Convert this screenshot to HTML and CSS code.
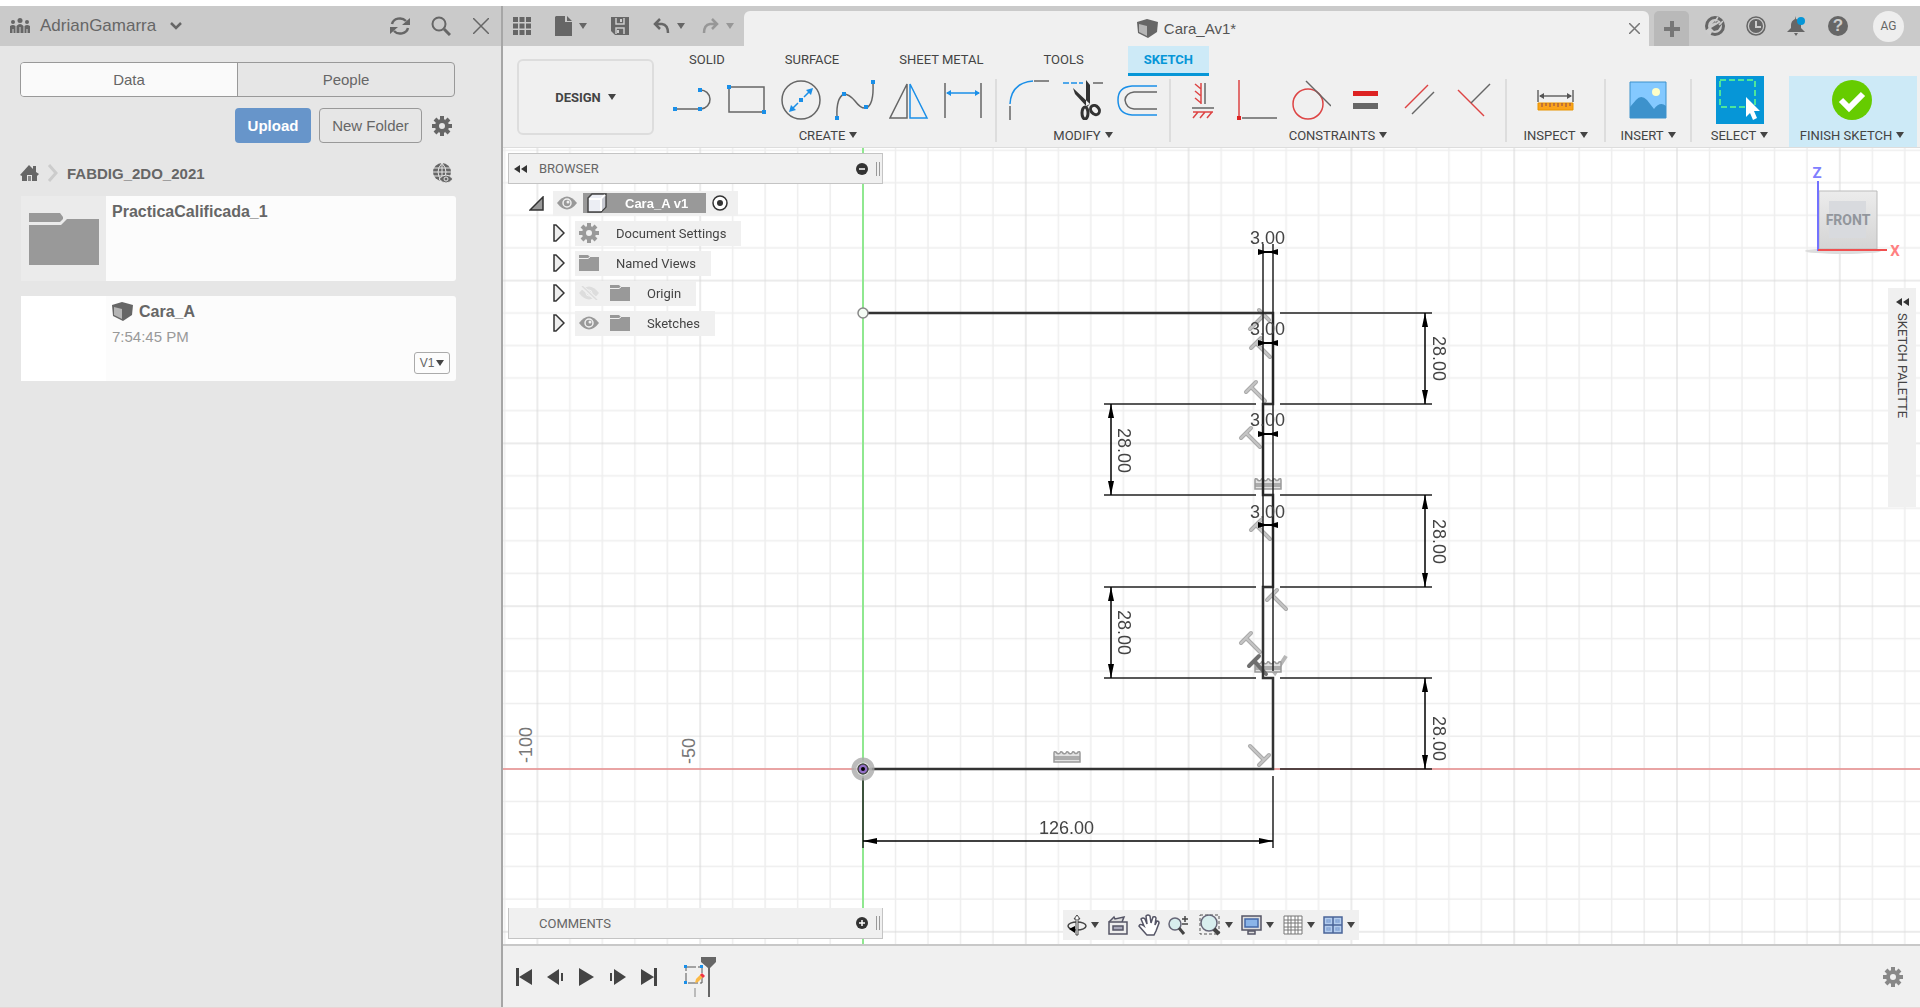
FILE: index.html
```html
<!DOCTYPE html>
<html lang="en">
<head>
  <meta charset="UTF-8" />
  <meta name="viewport" content="width=device-width, initial-scale=1.0"/>
  <title>Cara_A v1 - Sketch</title>
  <link rel="stylesheet" href="styles.css">
</head>
<body>

  <!-- shared icons -->
  <svg class="defs" width="0" height="0">
    <symbol id="cube" viewBox="0 0 21 20">
      <path d="M0 3 10 0 21 3 20 13 11 19 1 14Z" fill="#666"/>
      <path d="M2 5 10 7V17L2 13Z" fill="#b5b5b5"/>
    </symbol>
    <symbol id="gear" viewBox="0 0 20 20">
      <circle cx="10" cy="10" r="5" fill="none" stroke="currentColor" stroke-width="4"/>
      <path d="M10 0V4M10 16V20M0 10H4M16 10H20M3 3 5.500 5.500M14.500 14.500 17 17M17 3 14.500 5.500M5.500 14.500 3 17" stroke="currentColor" stroke-width="4"/>
    </symbol>
    <symbol id="folder" viewBox="0 0 20 16">
      <path d="M0 0H9L11 2H20V16H0Z" fill="#999"/>
      <path d="M0 3.500H9L11 2" fill="none" stroke="#f0f0f0"/>
    </symbol>
    <symbol id="eye" viewBox="0 0 20 14">
      <path d="M0 7Q10-6 20 7Q10 20 0 7Z" fill="#999"/>
      <circle cx="10" cy="7" r="4" fill="#999" stroke="#f0f0f0" stroke-width="1.500"/>
      <circle cx="11" cy="6" r="1.500" fill="#f0f0f0"/>
    </symbol>
    <symbol id="expand" viewBox="0 0 12 18">
      <path d="M1 1H3L11 9 3 17H1Z" fill="#eee" stroke="#333" stroke-width="1.500"/>
    </symbol>
    <symbol id="rewind" viewBox="0 0 13 8">
      <path d="M6 0V8L0 4ZM13 0V8L7 4Z" fill="#333"/>
    </symbol>
  </svg>

  <div class="app">
    <aside class="data-panel">
      <header class="panel-header">
        <svg width="20" height="16" viewBox="0 0 20 16" fill="#666">
          <circle cx="3" cy="4" r="2"/><circle cx="10" cy="2.500" r="2.500"/><circle cx="17" cy="4" r="2"/>
          <path d="M0 15V8Q3 6 5.500 8V15ZM6.500 15V8Q10 4 13.500 8V15ZM14.500 15V8Q17 6 20 8V15Z"/>
          <path d="M3 11V15M10 9V15M17 11V15" stroke="#ccc"/>
        </svg>
        <button class="team-name">AdrianGamarra
          <svg width="12" height="8" viewBox="0 0 12 8"><path d="M1 1 6 6 11 1" fill="none" stroke="#666" stroke-width="2.500"/></svg>
        </button>
        <button aria-label="Refresh">
          <svg width="22" height="18" viewBox="0 0 22 18" fill="none" stroke="#666" stroke-width="2.500">
            <path d="M3 7A8 7 0 0 1 17 4M19 11A8 7 0 0 1 5 14"/>
            <path d="M21 1V8H13ZM1 17V10H9Z" fill="#666" stroke="none"/>
          </svg>
        </button>
        <button aria-label="Search">
          <svg width="20" height="20" viewBox="0 0 20 20" fill="none" stroke="#666"><circle cx="8" cy="8" r="6.500" stroke-width="2"/><path d="M13 13 19 19" stroke-width="3"/></svg>
        </button>
        <button aria-label="Close panel">
          <svg width="16" height="16" viewBox="0 0 16 16" stroke="#666" stroke-width="1.500"><path d="M0 0 16 16M16 0 0 16"/></svg>
        </button>
      </header>

      <div class="panel-body">
        <div class="switch">
          <button class="active">Data</button>
          <button>People</button>
        </div>

        <div class="actions">
          <button class="upload">Upload</button>
          <button class="new-folder">New Folder</button>
          <button class="plain" aria-label="Settings"><svg width="20" height="20"><use href="#gear"/></svg></button>
        </div>

        <div class="breadcrumb">
          <svg width="19" height="18" viewBox="0 0 19 18"><path d="M9 1 13 5V2H16V8L19 10 17 12V17H12V11H7V17H2V12L0 11Z" fill="#666"/><path d="M8 12H11V17H8Z" fill="#888"/></svg>
          <svg width="12" height="18" viewBox="0 0 12 18"><path d="M2 1 9 9 2 17" fill="none" stroke="#ccc" stroke-width="3"/></svg>
          <a href="#">FABDIG_2DO_2021</a>
          <svg width="21" height="21" viewBox="0 0 21 21">
            <circle cx="10" cy="9" r="9" fill="#666"/>
            <path d="M0 5H20M0 9H20M0 13H20M10 0V18M10 0Q2 9 10 18M10 0Q18 9 10 18" fill="none" stroke="#e6e6e6"/>
            <path d="M7 16Q14 8 21 16Q14 24 7 16Z" fill="#666" stroke="#e6e6e6"/><circle cx="14" cy="16" r="2" fill="#666" stroke="#e6e6e6"/>
          </svg>
        </div>

        <article class="card">
          <div class="thumb folder-thumb">
            <svg width="70" height="52" viewBox="0 0 70 52" fill="#999"><path d="M0 0H31L34 4V6L31 9H0Z"/><path d="M0 12H32L38 6H70V52H0Z"/></svg>
          </div>
          <div class="card-text"><h2>PracticaCalificada_1</h2></div>
        </article>

        <article class="card">
          <div class="thumb"></div>
          <div class="card-text">
            <h2><svg width="21" height="20"><use href="#cube"/></svg>Cara_A</h2>
            <p>7:54:45 PM</p>
            <button class="version">V1<span class="caret"></span></button>
          </div>
        </article>
      </div>
    </aside>

    <main class="workspace">
      <header class="topbar">
        <div class="quick">
          <button aria-label="Show data panel">
            <svg width="18" height="18" viewBox="0 0 18 18"><path d="M2.500 0V18M9 0V18M15.500 0V18" stroke="#666" stroke-width="5"/><path d="M0 5.700H18M0 12.200H18" stroke="#ccc" stroke-width="1.500"/></svg>
          </button>
          <button class="with-caret" aria-label="File">
            <svg width="17" height="20" viewBox="0 0 17 20"><path d="M0 1 1 0H10V6H17V20H0ZM12 0 17 5H12Z" fill="#666"/></svg><span class="caret"></span>
          </button>
          <button aria-label="Save">
            <svg width="18" height="18" viewBox="0 0 18 18"><path d="M0 0H18V18H4L0 14Z" fill="#666"/><path d="M5 1V7H13V1M5 17V11H13V17" fill="none" stroke="#ccc" stroke-width="1.500"/><path d="M10 2V5M7 13V16" stroke="#ccc" stroke-width="2"/></svg>
          </button>
          <button class="with-caret" aria-label="Undo">
            <svg width="17" height="16" viewBox="0 0 17 16" fill="none" stroke="#666" stroke-width="2.500"><path d="M7 1 2 6 7 11M2 6H9Q15 7 15 15"/></svg><span class="caret"></span>
          </button>
          <button class="with-caret faded" aria-label="Redo">
            <svg width="17" height="16" viewBox="0 0 17 16" fill="none" stroke="#666" stroke-width="2.500"><path d="M10 1 15 6 10 11M15 6H8Q2 7 2 15"/></svg><span class="caret"></span>
          </button>
        </div>
        <div class="doc-tab">
          <span class="doc-title"><svg width="21" height="20"><use href="#cube"/></svg>Cara_Av1*</span>
          <button aria-label="Close document"><svg width="11" height="11" viewBox="0 0 11 11" stroke="#777" stroke-width="1.500"><path d="M0 0 11 11M11 0 0 11"/></svg></button>
        </div>
        <button class="new-tab" aria-label="New design"><svg width="16" height="16" viewBox="0 0 16 16" stroke="#777" stroke-width="4"><path d="M8 0V16M0 8H16"/></svg></button>
        <div class="status">
          <button aria-label="Extensions"><svg width="20" height="20" viewBox="0 0 20 20"><circle cx="10" cy="10" r="8.500" fill="none" stroke="#666" stroke-width="3"/><path d="M7 8 10 5 11 7 14 4M16 6 14 9 17 8 13 14 9 15 6 12Z" fill="#666"/><path d="M0 15 5 11 7 16 5 20Z" fill="#ccc"/><path d="M13 1 10 5M18 5 14 9" stroke="#ccc" stroke-width="1.500"/></svg></button>
          <button aria-label="Job status"><svg width="20" height="20" viewBox="0 0 20 20" fill="none"><circle cx="10" cy="10" r="9" stroke="#666" stroke-width="1.500"/><circle cx="10" cy="10" r="7" fill="#666"/><path d="M10 5V11H15" stroke="#ccc" stroke-width="2"/></svg></button>
          <button aria-label="Notifications"><svg width="20" height="20" viewBox="0 0 20 20"><path d="M9 0V3Q14 4 14 9V12L18 16H0L4 12V9Q4 5 8 3ZM7 17H11L9 20Z" fill="#666"/><circle cx="14" cy="5" r="4" fill="#0696d7"/></svg></button>
          <button class="help" aria-label="Help">?</button>
          <button class="avatar">AG</button>
        </div>
      </header>

      <div class="ribbon">
        <button class="design">DESIGN<span class="caret"></span></button>
        <div class="ribbon-main">
          <nav class="tabs">
            <a href="#">SOLID</a>
            <a href="#">SURFACE</a>
            <a href="#">SHEET METAL</a>
            <a href="#">TOOLS</a>
            <a href="#" class="current">SKETCH</a>
          </nav>
          <div class="groups">
            <section class="group">
              <div class="tools">
                <button aria-label="Line"><svg viewBox="0 0 40 40"><path d="M1 29H27M27 10A9 9 0 0 1 28 29" class="dark"/><path d="M0 27H4V31H0ZM25 27H29V31H25ZM25 8H29V12H25Z" class="node"/></svg></button>
                <button aria-label="Rectangle"><svg viewBox="0 0 40 40"><path d="M2 7H37V32H2Z" class="dark"/><path d="M0 5H4V9H0ZM35 30H39V34H35Z" class="node"/></svg></button>
                <button aria-label="Circle"><svg viewBox="0 0 40 40"><circle cx="20" cy="20" r="19" class="dark"/><path d="M17 23 11 29M23 17 29 11" class="blue"/><path d="M18 18H22V22H18ZM8 32 10 25 15 30ZM32 8 30 15 25 10Z" class="node"/></svg></button>
                <button aria-label="Spline"><svg viewBox="0 0 40 40"><path d="M2 37Q1 18 9 14Q14 14 20 21Q26 29 31 28Q39 25 38 3" class="dark"/><path d="M0 36H4V40H0ZM7 12H11V16H7ZM29 25H33V29H29ZM36 0H40V4H36Z" class="node"/></svg></button>
                <button aria-label="Mirror"><svg viewBox="0 0 40 40"><path d="M18 4V38H1Z" class="dark"/><path d="M21 4V38H38Z" class="blue"/></svg></button>
                <button aria-label="Sketch dimension"><svg viewBox="0 0 40 40"><path d="M2 3V38M38 3V38" class="dark"/><path d="M4 13H36" class="blue"/><path d="M3 13 8 10V16ZM37 13 32 10V16Z" class="node"/></svg></button>
              </div>
              <button class="group-label">CREATE<span class="caret"></span></button>
            </section>

            <section class="group">
              <div class="tools">
                <button aria-label="Fillet"><svg viewBox="0 0 40 40"><path d="M25 1H40M1 26V40" class="dark"/><path d="M1 24Q2 3 24 1" class="blue"/></svg></button>
                <button aria-label="Trim"><svg viewBox="0 0 40 40"><path d="M0 3H20" class="blue" stroke-dasharray="6 2"/><path d="M30 3H40" class="dark"/><path d="M23 0 27 5V24L23 26ZM10 8 12 14 24 27 27 24Z" fill="#333"/><g fill="none" stroke="#333" stroke-width="3"><ellipse cx="22" cy="33" rx="3" ry="6"/><ellipse cx="32" cy="30" rx="4" ry="5" transform="rotate(-40 32 30)"/></g></svg></button>
                <button aria-label="Offset"><svg viewBox="0 0 40 40"><path d="M40 6H15Q1 7 1 20Q1 34 15 35H40" class="blue"/><path d="M40 12H17Q9 13 8 20Q9 28 17 29H40" class="dark"/></svg></button>
              </div>
              <button class="group-label">MODIFY<span class="caret"></span></button>
            </section>

            <section class="group">
              <div class="tools">
                <button aria-label="Horizontal/Vertical"><svg viewBox="0 0 40 40"><path d="M18 3V24M12 4 18 9M12 11 18 16M12 18 18 23M10 32H30M10 38 15 32M17 38 22 32M24 38 29 32" class="red"/><path d="M22 3V24M9 28H31" class="dark"/></svg></button>
                <button aria-label="Coincident"><svg viewBox="0 0 40 40"><path d="M2 0V36" class="red"/><path d="M5 38H40" class="dark"/><path d="M0 36H4V40H0Z" fill="#d22"/></svg></button>
                <button aria-label="Tangent"><svg viewBox="0 0 40 40"><circle cx="17" cy="24" r="15" class="red"/><path d="M15 1 40 26" class="dark"/></svg></button>
                <button aria-label="Equal"><svg viewBox="0 0 40 40"><path d="M8 11H33V16H8Z" fill="#d22"/><path d="M8 23H33V29H8Z" fill="#666"/></svg></button>
                <button aria-label="Parallel"><svg viewBox="0 0 40 40"><path d="M6 28 29 5" class="red"/><path d="M13 34 35 12" class="dark"/></svg></button>
                <button aria-label="Perpendicular"><svg viewBox="0 0 40 40"><path d="M5 10 31 36" class="red"/><path d="M18 23 37 4" class="dark"/></svg></button>
              </div>
              <button class="group-label">CONSTRAINTS<span class="caret"></span></button>
            </section>

            <section class="group inspect">
              <div class="tools">
                <button aria-label="Measure"><svg viewBox="0 0 40 40"><path d="M2 10V22M37 10V22M4 16H35" class="dark"/><path d="M3 16 8 13V19ZM36 16 31 13V19Z" fill="#555"/><path d="M2 23H37V30H2Z" fill="#faa31b" stroke="#e89400"/><path d="M6 23V27M10 23V26M14 23V27M18 23V26M22 23V27M26 23V26M30 23V27M34 23V26" stroke="#845"/></svg></button>
              </div>
              <button class="group-label">INSPECT<span class="caret"></span></button>
            </section>

            <section class="group insert">
              <div class="tools">
                <button aria-label="Insert image"><svg viewBox="0 0 40 40"><path d="M2 2H38V38H2Z" fill="#84c9ff"/><path d="M2 27 8 20Q13 14 19 20L26 29Q32 21 38 26V38H2Z" fill="#3d92cc"/><circle cx="28" cy="12" r="4" fill="#ffffc8"/><path d="M2 2H38V38H2Z" fill="none" stroke="#3d92cc"/></svg></button>
              </div>
              <button class="group-label">INSERT<span class="caret"></span></button>
            </section>

            <section class="group select">
              <div class="tools">
                <button aria-label="Select"><svg class="big" viewBox="0 0 48 48"><path d="M0 0H48V48H0Z" fill="#0696d7"/><path d="M4 4H39V31H4Z" fill="none" stroke="#6f8" stroke-width="1.500" stroke-dasharray="6 3"/><path d="M30 21V41L34 37 37 44 41 42 38 35H44Z" fill="#fff"/></svg></button>
              </div>
              <button class="group-label">SELECT<span class="caret"></span></button>
            </section>

            <section class="group finish">
              <div class="tools">
                <button aria-label="Finish sketch"><svg viewBox="0 0 40 40"><circle cx="20" cy="20" r="20" fill="#6c0"/><path d="M9 20 17 28 31 14" fill="none" stroke="#fff" stroke-width="6"/></svg></button>
              </div>
              <button class="group-label">FINISH SKETCH<span class="caret"></span></button>
            </section>
          </div>
        </div>
      </div>

      <div class="canvas">
        <svg class="drawing" width="100%" height="100%">
          <defs>
            <!-- one major cell, 50 mm -->
            <pattern id="grid" width="162.800" height="162.800" patternUnits="userSpaceOnUse" patternTransform="translate(360 621)">
              <path d="M32.500 0V163M65 0V163M97.500 0V163M130 0V163M0 32.500H163M0 65H163M0 97.500H163M0 130H163" fill="none" stroke="#eee" stroke-width="1.500"/>
              <path d="M0 0V163M0 0H163M162.800 0V163M0 162.800H163" fill="none" stroke="#d8d8d8"/>
            </pattern>
            <marker id="arrow" viewBox="0 0 14 6" refX="14" refY="3" markerWidth="14" markerHeight="6" markerUnits="userSpaceOnUse" orient="auto-start-reverse"><path d="M0 0 14 3 0 6Z"/></marker>
            <g id="perp"><path d="M-5 5 5-5M0 0 14 14" fill="none" stroke="#999" stroke-width="4" stroke-linecap="round"/><path d="M-5 5 5-5M0 0 14 14" fill="none" stroke="#bbb" stroke-width="2" stroke-linecap="round"/></g>
            <g id="level"><path d="M-13 5V-4Q-13-6-11-5Q-9-2-7-4Q-6-6-5-5Q-3-2-1-4Q0-6 1-5Q3-2 5-4Q6-6 7-5Q9-2 11-5Q13-6 13-4V5ZM-13 0H13M-13 2H13" fill="#ddd" stroke="#888" stroke-width="1.500"/></g>
            <g id="bowtie"><path d="M-10-3V3L0 0ZM10-3V3L0 0Z"/><path d="M-8 0H8" stroke="#000" stroke-width="2"/></g>
          </defs>
          <rect width="100%" height="100%" fill="url(#grid)"/>
          <g transform="translate(360 621)">
            <path d="M0-640V320" stroke="#90e890" stroke-width="2"/>
            <path d="M-400 0H4000" stroke="#e88c8c" stroke-width="1.500"/>

            <g class="glyphs">
              <use href="#perp" x="-7" y="0" transform="translate(401 -447) rotate(90)"/>
              <use href="#perp" x="393" y="-426"/>
              <use href="#perp" x="388" y="-382"/>
              <use href="#perp" x="383" y="-336"/>
              <use href="#perp" x="393" y="-244"/>
              <use href="#perp" x="409" y="-174"/>
              <use href="#perp" x="383" y="-131"/>
              <use href="#perp" transform="translate(401 -9) rotate(180)"/>
              <path d="M407-102 412-96 423-113" fill="none" stroke="#aaa" stroke-width="4"/>
              <use href="#level" x="405" y="-285"/>
              <use href="#level" x="405" y="-102"/>
              <use href="#level" x="204" y="-12"/>
              <path d="M386-103 396-113M391-108 403-95" stroke="#555" stroke-width="4" stroke-linecap="round"/>
            </g>

            <path class="profile" d="M0 0H410V-91H400V-182H410V-274H400V-365H410V-456H0"/>
            <path class="thin" d="M400-525V-182M410-525V-98M410 7V79M0 7V79M417-456H569M417-365H569M417-274H569M417-182H569M417-91H569M417 0H569M241-365H393M241-274H393M241-182H393M241-91H393"/>
            <path class="dim" d="M0 72H410"/>
            <path class="dim" d="M562-456V-365"/>
            <path class="dim" d="M562-274V-182"/>
            <path class="dim" d="M562-91V0"/>
            <path class="dim" d="M248-365V-274"/>
            <path class="dim" d="M248-182V-91"/>
            <use href="#bowtie" x="405" y="-517"/>
            <use href="#bowtie" x="405" y="-426"/>
            <use href="#bowtie" x="405" y="-335"/>
            <use href="#bowtie" x="405" y="-244"/>

            <g class="dim-text">
              <text x="387" y="-525">3.00</text>
              <text x="387" y="-434">3.00</text>
              <text x="387" y="-343">3.00</text>
              <text x="387" y="-251">3.00</text>
              <text x="176" y="65">126.00</text>
              <text transform="translate(570 -433) rotate(90)">28.00</text>
              <text transform="translate(570 -250) rotate(90)">28.00</text>
              <text transform="translate(570 -53) rotate(90)">28.00</text>
              <text transform="translate(255 -341) rotate(90)">28.00</text>
              <text transform="translate(255 -159) rotate(90)">28.00</text>
              <text class="scale" transform="translate(-331 -6) rotate(-90)">-100</text>
              <text class="scale" transform="translate(-168 -5) rotate(-90)">-50</text>
            </g>

            <circle cy="-456" r="5" fill="#f4fbf4" stroke="#888" stroke-width="1.500"/>
            <circle r="9" fill="#fff" fill-opacity=".600" stroke="#aaa" stroke-opacity=".800" stroke-width="5"/>
            <circle r="5" fill="#9370c8" stroke="#444" stroke-width="1.500"/>
            <circle r="2"/>
          </g>
        </svg>

        <section class="browser">
          <div class="float-bar">
            <svg width="13" height="8"><use href="#rewind"/></svg>
            <h3>BROWSER</h3>
            <button aria-label="Collapse browser"><svg width="12" height="12" viewBox="0 0 12 12"><circle cx="6" cy="6" r="6" fill="#333"/><path d="M3 6H9" stroke="#fff" stroke-width="1.500"/></svg></button>
            <span class="grip"></span>
          </div>
          <ul class="tree">
            <li class="root">
              <svg width="15" height="15" viewBox="0 0 15 15"><path d="M1 14H14V1Z" fill="#999" stroke="#333" stroke-width="1.500"/></svg>
              <div class="node-box">
                <svg width="20" height="14"><use href="#eye"/></svg>
                <span class="selected"><svg width="20" height="20" viewBox="0 0 20 20"><path d="M1 5 5 1H19V14L14 19H1Z" fill="#eceef4" stroke="#444" stroke-width="1.500"/><path d="M2 6H14V18M14 6 18 2" fill="none" stroke="#fff" stroke-width="2"/><path d="M15 6 18 3V14L15 17Z" fill="#c8cad2"/></svg>Cara_A v1</span>
                <svg width="16" height="16" viewBox="0 0 16 16"><circle cx="8" cy="8" r="7" fill="#fff" stroke="#333" stroke-width="1.500"/><circle cx="8" cy="8" r="3" fill="#333"/></svg>
              </div>
            </li>
            <li><svg width="12" height="18"><use href="#expand"/></svg><div class="node-box"><svg class="muted" width="20" height="20"><use href="#gear"/></svg><span>Document Settings</span></div></li>
            <li><svg width="12" height="18"><use href="#expand"/></svg><div class="node-box"><svg width="20" height="16"><use href="#folder"/></svg><span>Named Views</span></div></li>
            <li><svg width="12" height="18"><use href="#expand"/></svg><div class="node-box"><svg width="20" height="14" viewBox="0 0 20 14"><path d="M0 7Q10-6 20 7Q10 20 0 7Z" fill="#ddd"/><circle cx="10" cy="7" r="3" fill="#ddd" stroke="#f0f0f0"/><path d="M2 0 18 14" stroke="#f0f0f0" stroke-width="4"/><path d="M3 0 18 14" stroke="#ddd" stroke-width="1.500"/></svg><svg width="20" height="16"><use href="#folder"/></svg><span>Origin</span></div></li>
            <li><svg width="12" height="18"><use href="#expand"/></svg><div class="node-box"><svg width="20" height="14"><use href="#eye"/></svg><svg width="20" height="16"><use href="#folder"/></svg><span>Sketches</span></div></li>
          </ul>
        </section>

        <svg class="viewcube" width="120" height="100" viewBox="0 0 120 100">
          <defs><linearGradient id="face" x2="0" y2="1"><stop stop-color="#ececec"/><stop offset="1" stop-color="#d4d4d4"/></linearGradient></defs>
          <ellipse cx="62" cy="88" rx="38" ry="3" fill="#ddd"/>
          <path d="M38 28H96V86H38Z" fill="url(#face)" stroke="#bbb"/>
          <path d="M48 38H85V75H48Z" fill="#d8dade"/>
          <text x="67" y="62" class="face-name">FRONT</text>
          <path d="M37 18V88" stroke="#7272ff" stroke-width="2"/>
          <path d="M37 87H106" stroke="#f05050" stroke-width="2"/>
          <text x="36" y="15" class="axis-z">Z</text>
          <text x="114" y="93" class="axis-x">X</text>
        </svg>

        <button class="palette"><svg width="13" height="8"><use href="#rewind"/></svg><span>SKETCH PALETTE</span></button>

        <section class="comments float-bar">
          <h3>COMMENTS</h3>
          <button aria-label="Add comment"><svg width="12" height="12" viewBox="0 0 12 12"><circle cx="6" cy="6" r="6" fill="#333"/><path d="M3 6H9M6 3V9" stroke="#fff" stroke-width="1.500"/></svg></button>
          <span class="grip"></span>
        </section>

        <div class="navbar">
          <button aria-label="Orbit"><svg width="20" height="22" viewBox="0 0 20 22"><ellipse cx="10" cy="12" rx="9" ry="4" fill="none" stroke="#444" stroke-width="1.500"/><path d="M9 21V5H7L10 1 13 5H11V21Z" fill="#fff" stroke="#444"/><path d="M2 15 8 12V19Z" fill="#000"/></svg><span class="caret"></span></button>
          <button aria-label="Look at"><svg width="22" height="20" viewBox="0 0 22 20" stroke="#556" stroke-width="1.500"><path d="M2 7 7 2 8 4 17 2 15 7" fill="#ddd"/><path d="M2 7H20V19H2Z" fill="#eee"/><path d="M6 11H16V15H6Z" fill="#aab"/></svg></button>
          <button aria-label="Pan"><svg width="22" height="22" viewBox="0 0 22 22"><path d="M8 20 1 12Q2 9 6 12L3 5Q5 3 7 5L9 10 8 2Q10 0 12 2L13 9 15 3Q17 2 18 4L17 11 19 7Q21 7 21 9L18 17 16 21H9Z" fill="#fff" stroke="#556" stroke-width="1.500"/></svg></button>
          <button aria-label="Zoom"><svg width="22" height="20" viewBox="0 0 22 20"><circle cx="7" cy="9" r="6" fill="#d8eeee" stroke="#667" stroke-width="1.500"/><path d="M11 13 16 19" stroke="#444" stroke-width="3"/><path d="M17 1V7M14 4H20M14 9H20" stroke="#444" stroke-width="1.500"/></svg></button>
          <button aria-label="Zoom window"><svg width="22" height="22" viewBox="0 0 22 22"><path d="M1 1H20V20H1Z" fill="none" stroke="#555" stroke-dasharray="3 2"/><circle cx="10" cy="9" r="8" fill="#d8eeee" stroke="#667" stroke-width="1.500"/><path d="M15 15 20 20" stroke="#444" stroke-width="4"/></svg><span class="caret"></span></button>
          <button aria-label="Display settings"><svg width="21" height="20" viewBox="0 0 21 20" stroke="#556" stroke-width="1.500"><path d="M1 1H20V15H1Z" fill="#ddd"/><path d="M4 4H17V12H4Z" fill="#8ab4e8" stroke="#4468a8"/><path d="M7 16H14V19H7Z" fill="#ddd"/></svg><span class="caret"></span></button>
          <button aria-label="Grid and snaps"><svg width="20" height="20" viewBox="0 0 20 20" fill="#fff" stroke="#777"><path d="M1 1H19V19H1ZM1 5H19M1 8H19M1 12H19M1 15H19M5 1V19M8 1V19M12 1V19M15 1V19"/></svg><span class="caret"></span></button>
          <button aria-label="Viewports"><svg width="20" height="18" viewBox="0 0 20 18" fill="#b4cdee" stroke="#4a6498" stroke-width="1.500"><path d="M1 1H19V17H1ZM10 1V17M1 9H19"/><path d="M4 4H7V6H4ZM13 4H16V6H13ZM4 12H7V14H4ZM13 12H16V14H13Z" stroke="#88a8d8"/></svg><span class="caret"></span></button>
        </div>
      </div>

      <footer class="timeline">
        <button aria-label="Go to start"><svg width="17" height="18" viewBox="0 0 17 18"><path d="M0 0H3V18H0ZM16 1V17L3 9Z"/></svg></button>
        <button aria-label="Step back"><svg width="17" height="18" viewBox="0 0 17 18"><path d="M12 1V17L0 9ZM14 5H16V13H14Z"/></svg></button>
        <button aria-label="Play"><svg width="17" height="18" viewBox="0 0 17 18"><path d="M1 0 16 9 1 18Z"/></svg></button>
        <button aria-label="Step forward"><svg width="17" height="18" viewBox="0 0 17 18"><path d="M5 1V17L17 9ZM1 5H3V13H1Z"/></svg></button>
        <button aria-label="Go to end"><svg width="17" height="18" viewBox="0 0 17 18"><path d="M1 1V17L14 9ZM14 0H17V18H14Z"/></svg></button>
        <svg class="marker" width="34" height="42" viewBox="0 0 34 42">
          <path d="M2 11H18V27H2Z" fill="none" stroke="#555" stroke-dasharray="10 2"/>
          <path d="M0 9H3V12H0ZM16 9H19V12H16ZM0 25H3V28H0Z" fill="#1a8fe8"/>
          <path d="M11 27 12 23 17 18 19 21 14 26Z" fill="#fbb945"/><path d="M16 19 18 17 21 20 19 22Z" fill="#e34"/>
          <path d="M11 32V41" stroke="#bbb" stroke-width="2"/>
          <path d="M17 1H32V6L26 12V41H24V12L17 6Z" fill="#666"/>
        </svg>
        <button class="timeline-gear" aria-label="Timeline settings"><svg width="20" height="20"><use href="#gear"/></svg></button>
      </footer>
    </main>
  </div>

</body>
</html>
```

FILE: styles.css
```css
* {
  box-sizing: border-box;
}

body {
  margin: 0;
  padding-top: 6px;
  height: 100vh;
  background-color: #fff;
  font-family: "Liberation Sans", Arial, sans-serif;
  font-size: 15px;
  color: #666;
}

svg {
  display: block;
  flex: none;
}

.defs {
  position: absolute;
}

button {
  display: flex;
  align-items: center;
  justify-content: center;
  margin: 0;
  padding: 0;
  border: none;
  background: none;
  color: inherit;
  font: inherit;
  cursor: pointer;
}

a {
  color: inherit;
  text-decoration: none;
}

h2, h3, p, ul {
  margin: 0;
  padding: 0;
}

.caret {
  border: 4px solid transparent;
  border-top: 6px solid #444;
  border-bottom: none;
}

.app {
  display: flex;
  height: 100%;
  border-bottom: 1px solid #e8d4d4;
}

/* data panel */
.data-panel {
  width: 503px;
  flex: none;
  background-color: #e6e6e6;
  border-right: 2px solid #a6a6a6;
}

.panel-header {
  display: flex;
  align-items: center;
  height: 40px;
  padding: 0 12px 0 10px;
  gap: 20px;
  background-color: #cacaca;
}

.team-name {
  margin-left: -10px;
  margin-right: auto;
  gap: 14px;
  font-size: 17px;
}

.panel-header button:last-child {
  margin-left: 2px;
}

.panel-body {
  padding: 16px 46px 0 20px;
}

.switch {
  display: flex;
  height: 35px;
  border: 1px solid #999;
  border-radius: 4px;
  overflow: hidden;
}

.switch button {
  flex: 1;
}

.switch .active {
  background-color: #fafafa;
  border-right: 1px solid #999;
}

.actions {
  display: flex;
  justify-content: flex-end;
  gap: 8px;
  margin-top: 11px;
  padding-right: 3px;
}

.upload, .new-folder {
  height: 35px;
  border-radius: 4px;
}

.upload {
  width: 76px;
  background-color: #6795ca;
  color: #fff;
  font-weight: bold;
}

.new-folder {
  width: 103px;
  border: 1px solid #999;
}

.actions .plain {
  margin-left: 2px;
}

.breadcrumb {
  display: flex;
  align-items: center;
  gap: 8px;
  height: 53px;
  padding-top: 7px;
  padding-right: 2px;
}

.breadcrumb a {
  flex: 1;
  font-weight: bold;
}

.card {
  display: flex;
  height: 85px;
  margin-bottom: 15px;
  margin-left: 1px;
  margin-right: -1px;
  background-color: #fcfcfc;
  border-radius: 3px;
}

.thumb {
  width: 85px;
  background-color: #fff;
}

.folder-thumb {
  padding: 17px 8px;
  background-color: #ebebeb;
}

.card-text {
  display: flex;
  flex-direction: column;
  flex: 1;
  padding: 6px;
}

.card h2 {
  display: flex;
  gap: 6px;
  font-size: 16px;
  line-height: 20px;
}

.card p {
  margin-top: 6px;
  line-height: 18px;
  color: #999;
}

.version {
  align-self: flex-end;
  width: 36px;
  height: 22px;
  gap: 2px;
  margin-top: 6px;
  border: 1px solid #aaa;
  border-radius: 3px;
  font-size: 12px;
}

/* top bar */
.workspace {
  display: flex;
  flex-direction: column;
  flex: 1;
  min-width: 0;
}

.topbar {
  display: flex;
  align-items: flex-end;
  height: 40px;
  background-color: #cacaca;
}

.quick {
  display: flex;
  align-items: center;
  width: 241px;
  height: 40px;
  padding-left: 10px;
  gap: 24px;
}

.quick .with-caret {
  gap: 7px;
}

.quick .caret {
  border-top-color: #666;
}

.faded {
  opacity: 0.5;
}

.quick .faded {
  margin-left: -7px;
}

.doc-tab {
  display: flex;
  align-items: center;
  flex: 1;
  height: 35px;
  padding-right: 9px;
  background-color: #f0f0f0;
  border-radius: 6px 6px 0 0;
}

.doc-title {
  display: flex;
  align-items: center;
  justify-content: center;
  flex: 1;
  gap: 6px;
  color: #555;
}

.new-tab {
  width: 35px;
  height: 35px;
  margin-left: 5px;
  background-color: #b9b9b9;
  border-radius: 5px 5px 0 0;
}

.status {
  display: flex;
  align-items: center;
  height: 40px;
  gap: 21px;
  padding: 0 16px;
}

.help {
  width: 20px;
  height: 20px;
  border-radius: 50%;
  background-color: #666;
  color: #ccc;
  font-size: 17px;
  font-weight: bold;
}

.avatar {
  width: 31px;
  height: 31px;
  margin-left: 4px;
  border-radius: 50%;
  background-color: #eee;
  font-family: Roboto, sans-serif;
  font-size: 12px;
}

/* ribbon */
.ribbon {
  display: flex;
  height: 102px;
  background-color: #f0f0f0;
  border-bottom: 1px solid #ddd;
  font-family: Roboto, sans-serif;
  font-size: 13px;
  color: #444;
}

.design {
  width: 138px;
  height: 76px;
  margin: 13px 7px 0 14px;
  gap: 7px;
  border: 2px solid #ddd;
  border-radius: 6px;
  font-weight: bold;
}

.ribbon-main {
  flex: 1;
}

.tabs {
  display: flex;
  gap: 28px;
  height: 30px;
  padding-left: 12px;
}

.tabs a {
  padding: 0 16px;
  line-height: 28px;
}

.tabs .current {
  background-color: #cdeaf7;
  border-bottom: 3px solid #0696d7;
  color: #0696d7;
  font-weight: bold;
}

.groups {
  display: flex;
  height: 71px;
}

.group {
  position: relative;
  padding: 0 7px 0 5px;
}

.group::after {
  content: "";
  position: absolute;
  top: 3px;
  right: 0;
  bottom: 5px;
  width: 2px;
  background-color: #ddd;
}

.tools {
  display: flex;
  justify-content: center;
  height: 47px;
}

.tools button {
  width: 54px;
}

.tools svg {
  width: 40px;
  height: 40px;
}

.tools .big {
  width: 48px;
  height: 48px;
}

.group-label {
  width: 100%;
  height: 24px;
  gap: 4px;
  white-space: nowrap;
}

.dark, .blue, .red {
  fill: none;
  stroke: #666;
  stroke-width: 1.5;
}

.blue {
  stroke: #1a8fe8;
}

.red {
  stroke: #d44;
}

.node {
  fill: #1a8fe8;
}

.inspect {
  width: 99px;
}

.insert {
  width: 86px;
}

.select {
  width: 97px;
}

.finish {
  width: 128px;
  margin-left: auto;
  margin-right: 3px;
  background-color: #cdeaf7;
}

.select::after, .finish::after {
  display: none;
}

/* sketch canvas */
.canvas {
  position: relative;
  flex: 1;
  min-height: 0;
  background-color: #fff;
}

.drawing {
  position: absolute;
  top: 0;
  left: 0;
}

.profile {
  fill: none;
  stroke: #333;
  stroke-width: 2.5;
}

.thin {
  fill: none;
  stroke: #222;
  stroke-width: 1.5;
}

.dim {
  fill: none;
  stroke: #000;
  stroke-width: 1.5;
  marker-start: url(#arrow);
  marker-end: url(#arrow);
}

.glyphs {
  opacity: 0.85;
}

.dim-text {
  font-size: 18px;
  fill: #444;
}

.dim-text .scale {
  fill: #777;
}

.browser {
  position: absolute;
  top: 5px;
  left: 5px;
  width: 375px;
}

.float-bar {
  display: flex;
  align-items: center;
  height: 31px;
  padding: 0 2px 0 5px;
  background-color: #f0f0f0;
  border: 1px solid #c4c4c4;
  font-family: Roboto, sans-serif;
}

.float-bar h3 {
  flex: 1;
  margin-left: 12px;
  font-size: 13px;
  font-weight: normal;
}

.grip {
  width: 4px;
  height: 14px;
  margin-left: 8px;
  border: 1px solid #999;
  border-width: 0 1px;
}

.tree {
  padding-top: 4px;
  list-style: none;
  font-family: Roboto, sans-serif;
  font-size: 13px;
  color: #444;
}

.tree li {
  display: flex;
  align-items: center;
  gap: 10px;
  height: 30px;
  padding-left: 45px;
}

.tree .root {
  padding-left: 21px;
  gap: 9px;
}

.node-box {
  display: flex;
  align-items: center;
  height: 25px;
  padding: 0 15px 0 4px;
  gap: 11px;
  background-color: #f0f0f0;
}

.node-box span {
  margin-left: 6px;
}

.muted {
  color: #999;
}

.root .node-box {
  gap: 6px;
  padding-right: 10px;
}

.node-box .selected {
  display: flex;
  align-items: center;
  width: 123px;
  height: 20px;
  margin-left: 0;
  padding-left: 4px;
  gap: 18px;
  background-color: #999;
  color: #fff;
  font-family: "Liberation Sans", Arial, sans-serif;
  font-weight: bold;
}

.viewcube {
  position: absolute;
  top: 15px;
  right: 19px;
  font-family: Roboto, sans-serif;
  font-weight: bold;
  text-anchor: middle;
}

.face-name {
  font-size: 14px;
  fill: #92969c;
}

.axis-z {
  font-size: 15px;
  fill: #8080ff;
}

.axis-x {
  font-size: 15px;
  fill: #ff8080;
}

.palette {
  position: absolute;
  top: 140px;
  right: 4px;
  flex-direction: column;
  justify-content: flex-start;
  width: 28px;
  height: 219px;
  padding-top: 10px;
  gap: 7px;
  background-color: #f0f0f0;
  color: #444;
  font-family: Roboto, sans-serif;
  font-size: 13px;
}

.palette span {
  writing-mode: vertical-rl;
}

.comments {
  position: absolute;
  left: 5px;
  bottom: 5px;
  width: 375px;
  border-top: none;
  padding-left: 18px;
}

.navbar {
  position: absolute;
  left: 560px;
  bottom: 4px;
  display: flex;
  align-items: center;
  width: 296px;
  height: 30px;
  padding: 0 4px;
  justify-content: space-between;
  background-color: #f0f0f0;
}

.navbar button {
  gap: 4px;
}

/* timeline */
.timeline {
  display: flex;
  align-items: center;
  height: 63px;
  padding: 0 17px 0 13px;
  gap: 14px;
  background-color: #f0f0f0;
  border-top: 2px solid #c8c8c8;
  fill: #444;
}

.marker {
  margin-left: 13px;
}

.timeline-gear {
  margin-left: auto;
  color: #888;
}
```
